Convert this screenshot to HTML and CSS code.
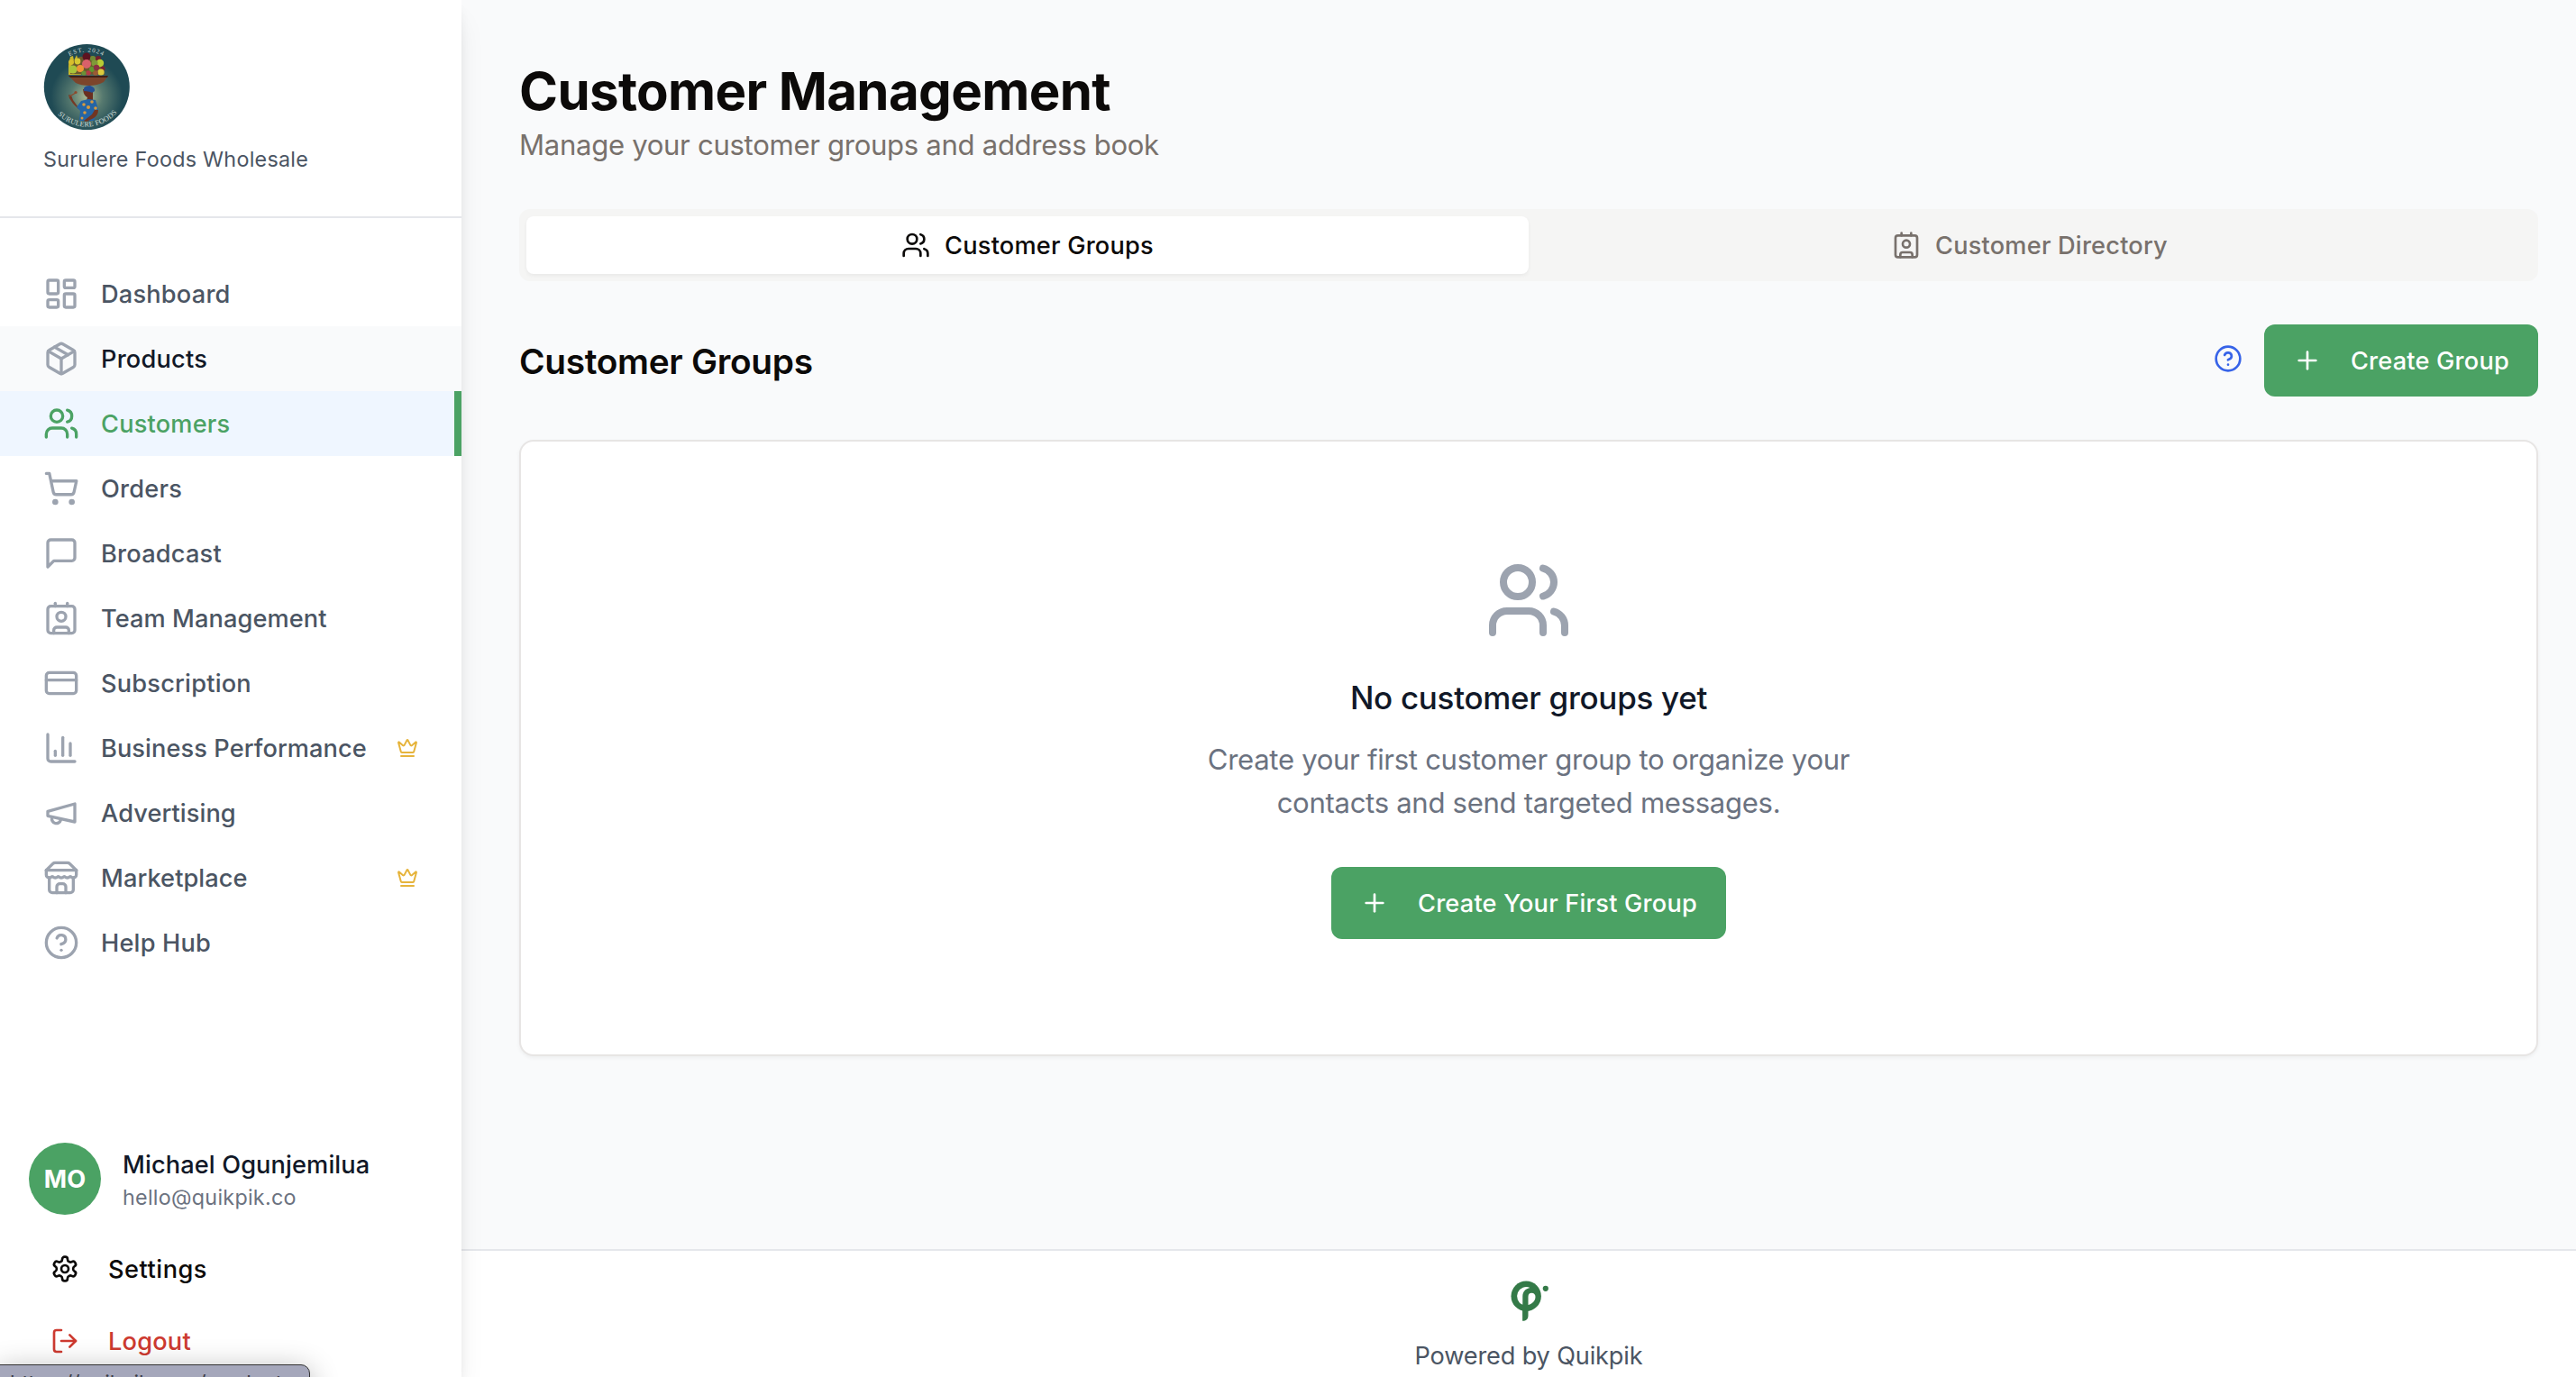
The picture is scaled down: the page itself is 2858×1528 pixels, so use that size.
FILE: index.html
```html
<!DOCTYPE html>
<html lang="en">
<head>
<meta charset="utf-8">
<title>Customer Management</title>
<link rel="stylesheet" href="styles.css">
</head>
<body>
<svg class="defs" width="0" height="0" aria-hidden="true">
  <symbol id="users" viewBox="0 0 24 24"><path d="M16 21v-2a4 4 0 0 0-4-4H6a4 4 0 0 0-4 4v2"/><circle cx="9" cy="7" r="4"/><path d="M22 21v-2a4 4 0 0 0-3-3.87"/><path d="M16 3.13a4 4 0 0 1 0 7.75"/></symbol>
  <symbol id="contact" viewBox="0 0 24 24"><path d="M16 2v2"/><path d="M7 22v-2a2 2 0 0 1 2-2h6a2 2 0 0 1 2 2v2"/><path d="M8 2v2"/><circle cx="12" cy="11" r="3"/><rect x="3" y="4" width="18" height="18" rx="2"/></symbol>
  <symbol id="help" viewBox="0 0 24 24"><circle cx="12" cy="12" r="10"/><path d="M9.09 9a3 3 0 0 1 5.83 1c0 2-3 3-3 3"/><path d="M12 17h.01"/></symbol>
  <symbol id="plus" viewBox="0 0 24 24"><path d="M5 12h14"/><path d="M12 5v14"/></symbol>
  <symbol id="crown" viewBox="0 0 24 24"><path d="M11.562 3.266a.5.5 0 0 1 .876 0L15.39 8.87a1 1 0 0 0 1.516.294L21.183 5.5a.5.5 0 0 1 .798.519l-2.834 10.246a1 1 0 0 1-.956.734H5.81a1 1 0 0 1-.957-.734L2.02 6.02a.5.5 0 0 1 .798-.519l4.276 3.664a1 1 0 0 0 1.516-.294z"/><path d="M5 21h14"/></symbol>
</svg>
<div class="app">
  <aside class="sidebar">
    <div class="brand">
      <svg class="brand-logo" viewBox="0 0 96 96">
        <defs>
          <radialGradient id="glow" cx="50%" cy="61%" r="42%"><stop offset="0" stop-color="#a9b893"/><stop offset=".45" stop-color="#56796f"/><stop offset="1" stop-color="#1f4a54"/></radialGradient>
          <path id="arc-top" d="M9.500 48a38.500 38.500 0 0 1 77 0"/>
          <path id="arc-bottom" d="M3.500 48a44.500 44.500 0 0 0 89 0"/>
        </defs>
        <circle cx="48.300" cy="48.500" r="47.500" fill="url(#glow)"/>
        <text class="logo-text logo-top"><textPath href="#arc-top" startOffset="50%">EST. 2024</textPath></text>
        <path d="M28 35V24l2-9 3-1 1 5 3-6 2 6 3-4v20z" fill="#c9b52b"/>
        <path d="M30 34l2-14 8-5 16-1 10 6 2 15z" fill="#6b5a2c"/>
        <g>
          <circle cx="48" cy="15" r="4.5" fill="#5c1420"/><circle cx="55" cy="17" r="3" fill="#6f8a35"/><circle cx="61" cy="17" r="3" fill="#741f2c"/>
          <circle cx="63" cy="22" r="4.2" fill="#b7cb35"/><circle cx="57" cy="22" r="3.6" fill="#7f9a38"/><circle cx="38" cy="20" r="3.4" fill="#d6c832"/>
          <circle cx="48" cy="23" r="5" fill="#d9616a"/><circle cx="33" cy="29" r="4.6" fill="#a8c43a"/><circle cx="41" cy="28" r="4" fill="#ee9535"/>
          <circle cx="54" cy="29" r="3" fill="#5f9630"/><circle cx="59" cy="27" r="3.2" fill="#8a3041"/><circle cx="66" cy="28" r="2.6" fill="#7a2430"/>
          <circle cx="64" cy="32" r="3.6" fill="#dccb3d"/><circle cx="50" cy="33" r="2.8" fill="#b43a45"/><circle cx="45" cy="33" r="2.6" fill="#6a9236"/><circle cx="58" cy="33" r="2.8" fill="#9a5b34"/><circle cx="31" cy="21" r="3" fill="#d8be2c"/>
        </g>
        <path d="M28 36h44l-5 7q-7 4-16 4t-15-3z" fill="#7c452b"/>
        <path d="M28 36h44l-1 2H30z" fill="#3f2018"/>
        <path d="M28 57l3 1 2 5 5 7 5 1 1 3-5-1-6-6-4-6z" fill="#753824"/>
        <path d="M29 59l7-4" stroke="#8d4a2c" stroke-width="1.200"/><circle cx="36" cy="54.500" r="1.600" fill="#8d4a2c"/>
        <path d="M44 51q1 8 5 9l-1 4h7V51z" fill="#6a2f20"/>
        <path d="M45 50q1-3 7-3 6 2 5 6-3 3-5 1-4-1-7-1z" fill="#244f93"/>
        <path d="M42 64l8-2 8 1 3 10-2 6-3 7H40l1-11-4-4z" fill="#2465a6"/>
        <g fill="#d69a3e"><circle cx="45" cy="68" r="1.8"/><circle cx="54" cy="65" r="1.8"/><circle cx="50" cy="71" r="2"/><circle cx="58" cy="72" r="1.8"/><circle cx="46" cy="77" r="1.8"/><circle cx="43" cy="83" r="1.5"/></g>
        <path d="M57 74l4 0q0 6-5 9l-8 4-3-1 9-7z" fill="#713522"/>
        <text class="logo-text logo-bottom"><textPath href="#arc-bottom" startOffset="51%">SURULERE FOODS</textPath></text>
      </svg>
      <div class="brand-name">Surulere Foods Wholesale</div>
    </div>
    <nav class="nav">
      <a class="nav-item"><svg class="icon" viewBox="0 0 24 24"><rect x="3" y="3" width="7" height="9" rx="1"/><rect x="14" y="3" width="7" height="5" rx="1"/><rect x="14" y="12" width="7" height="9" rx="1"/><rect x="3" y="16" width="7" height="5" rx="1"/></svg><span>Dashboard</span></a>
      <a class="nav-item hover"><svg class="icon" viewBox="0 0 24 24"><path d="m7.5 4.27 9 5.15"/><path d="M21 8a2 2 0 0 0-1-1.73l-7-4a2 2 0 0 0-2 0l-7 4A2 2 0 0 0 3 8v8a2 2 0 0 0 1 1.73l7 4a2 2 0 0 0 2 0l7-4A2 2 0 0 0 21 16Z"/><path d="m3.3 7 8.7 5 8.7-5"/><path d="M12 22V12"/></svg><span>Products</span></a>
      <a class="nav-item active"><svg class="icon"><use href="#users"/></svg><span>Customers</span></a>
      <a class="nav-item"><svg class="icon" viewBox="0 0 24 24"><circle cx="8" cy="21" r="1"/><circle cx="19" cy="21" r="1"/><path d="M2.05 2.05h2l2.66 12.42a2 2 0 0 0 2 1.58h9.78a2 2 0 0 0 1.95-1.57l1.65-7.43H5.12"/></svg><span>Orders</span></a>
      <a class="nav-item"><svg class="icon" viewBox="0 0 24 24"><path d="M21 15a2 2 0 0 1-2 2H7l-4 4V5a2 2 0 0 1 2-2h14a2 2 0 0 1 2 2z"/></svg><span>Broadcast</span></a>
      <a class="nav-item tight"><svg class="icon"><use href="#contact"/></svg><span>Team Management</span></a>
      <a class="nav-item"><svg class="icon" viewBox="0 0 24 24"><rect x="2" y="5" width="20" height="14" rx="2"/><path d="M2 10h20"/></svg><span>Subscription</span></a>
      <a class="nav-item tight"><svg class="icon" viewBox="0 0 24 24"><path d="M3 3v16a2 2 0 0 0 2 2h16"/><path d="M18 17V9"/><path d="M13 17V5"/><path d="M8 17v-3"/></svg><span>Business Performance</span><svg class="crown"><use href="#crown"/></svg></a>
      <a class="nav-item tight"><svg class="icon" viewBox="0 0 24 24"><path d="m3 11 18-5v12L3 14v-3z"/><path d="M11.6 16.8a3 3 0 1 1-5.8-1.6"/></svg><span>Advertising</span></a>
      <a class="nav-item tight"><svg class="icon" viewBox="0 0 24 24"><path d="m2 7 4.41-4.41A2 2 0 0 1 7.83 2h8.34a2 2 0 0 1 1.42.59L22 7"/><path d="M4 12v8a2 2 0 0 0 2 2h12a2 2 0 0 0 2-2v-8"/><path d="M15 22v-4a2 2 0 0 0-2-2h-2a2 2 0 0 0-2 2v4"/><path d="M2 7h20"/><path d="M22 7v3a2 2 0 0 1-2 2a2.7 2.7 0 0 1-1.59-.63.7.7 0 0 0-.82 0A2.7 2.7 0 0 1 16 12a2.7 2.7 0 0 1-1.59-.63.7.7 0 0 0-.82 0A2.7 2.7 0 0 1 12 12a2.7 2.7 0 0 1-1.59-.63.7.7 0 0 0-.82 0A2.7 2.7 0 0 1 8 12a2.7 2.7 0 0 1-1.59-.63.7.7 0 0 0-.82 0A2.7 2.7 0 0 1 4 12a2 2 0 0 1-2-2V7"/></svg><span>Marketplace</span><svg class="crown"><use href="#crown"/></svg></a>
      <a class="nav-item"><svg class="icon"><use href="#help"/></svg><span>Help Hub</span></a>
    </nav>
    <div class="account">
      <div class="profile">
        <div class="avatar">MO</div>
        <div class="profile-text">
          <div class="profile-name">Michael Ogunjemilua</div>
          <div class="profile-mail">hello@quikpik.co</div>
        </div>
      </div>
      <a class="account-link settings"><svg class="icon icon-sm" viewBox="0 0 24 24"><path d="M12.22 2h-.44a2 2 0 0 0-2 2v.18a2 2 0 0 1-1 1.73l-.43.25a2 2 0 0 1-2 0l-.15-.08a2 2 0 0 0-2.73.73l-.22.38a2 2 0 0 0 .73 2.73l.15.1a2 2 0 0 1 1 1.72v.51a2 2 0 0 1-1 1.74l-.15.09a2 2 0 0 0-.73 2.73l.22.38a2 2 0 0 0 2.73.73l.15-.08a2 2 0 0 1 2 0l.43.25a2 2 0 0 1 1 1.73V20a2 2 0 0 0 2 2h.44a2 2 0 0 0 2-2v-.18a2 2 0 0 1 1-1.73l.43-.25a2 2 0 0 1 2 0l.15.08a2 2 0 0 0 2.73-.73l.22-.39a2 2 0 0 0-.73-2.73l-.15-.08a2 2 0 0 1-1-1.74v-.5a2 2 0 0 1 1-1.74l.15-.09a2 2 0 0 0 .73-2.73l-.22-.38a2 2 0 0 0-2.73-.73l-.15.08a2 2 0 0 1-2 0l-.43-.25a2 2 0 0 1-1-1.73V4a2 2 0 0 0-2-2z"/><circle cx="12" cy="12" r="3"/></svg><span>Settings</span></a>
      <a class="account-link logout"><svg class="icon icon-sm" viewBox="0 0 24 24"><path d="M9 21H5a2 2 0 0 1-2-2V5a2 2 0 0 1 2-2h4"/><path d="m16 17 5-5-5-5"/><path d="M21 12H9"/></svg><span>Logout</span></a>
    </div>
  </aside>
  <div class="content">
    <main class="main">
      <h1 class="title">Customer Management</h1>
      <p class="subtitle">Manage your customer groups and address book</p>
      <div class="tabs">
        <div class="tab selected"><svg class="icon icon-sm"><use href="#users"/></svg><span>Customer Groups</span></div>
        <div class="tab"><svg class="icon icon-sm"><use href="#contact"/></svg><span>Customer Directory</span></div>
      </div>
      <div class="section-head">
        <h2 class="section-title">Customer Groups</h2>
        <div class="actions">
          <svg class="icon icon-sm help-link"><use href="#help"/></svg>
          <button class="button"><svg class="icon icon-sm"><use href="#plus"/></svg><span>Create Group</span></button>
        </div>
      </div>
      <section class="card">
        <svg class="icon icon-xl"><use href="#users"/></svg>
        <h3 class="empty-title">No customer groups yet</h3>
        <p class="empty-text">Create your first customer group to organize your<br>contacts and send targeted messages.</p>
        <button class="button"><svg class="icon icon-sm"><use href="#plus"/></svg><span>Create Your First Group</span></button>
      </section>
    </main>
    <footer class="footer">
      <svg class="footer-logo" viewBox="0 0 48 48">
        <circle cx="21.200" cy="22.300" r="16.700" fill="#347a48"/>
        <path d="M17.100 36v13.700c4 0 6.400-2 6.400-6V36z" fill="#347a48"/>
        <path d="M17.300 31.800A10.300 10.300 0 0 1 25.500 12.900C20.500 13.800 17.300 17.500 17.300 22.500z" fill="#fff"/>
        <path d="M23.500 31.900V23c0-2.800 1.500-4.200 3.700-4.200 2.800 0 4.300 2 4.300 4.200 0 4.500-3.500 8-8 8.900z" fill="#fff"/>
        <circle cx="42.800" cy="13.800" r="3.100" fill="#347a48"/>
      </svg>
      <div class="footer-text">Powered by Quikpik</div>
    </footer>
  </div>
</div>
<div class="status">https://quikpik.com/products</div>
</body>
</html>
```
FILE: styles.css
```css
* { box-sizing: border-box; margin: 0; padding: 0; }
html, body { height: 100%; overflow: hidden; }
body {
  font-family: Inter, "Liberation Sans", sans-serif;
  font-size: 27.2px;
  line-height: 40px;
  letter-spacing: .2px;
  color: #0c0a09;
  background: #f9fafb;
}
.defs { position: absolute; }
.app { display: flex; height: 1528px; }
.icon {
  flex: none;
  width: 40px;
  height: 40px;
  fill: none;
  stroke: currentColor;
  stroke-width: 2;
  stroke-linecap: round;
  stroke-linejoin: round;
}
.icon-sm { width: 32px; height: 32px; }
.icon-xl { width: 96px; height: 96px; color: #9ca3af; }
.nav-item span, .account-link span, .tab span, .button span { padding-top: 2px; }

.sidebar {
  display: flex;
  flex-direction: column;
  flex: none;
  position: relative;
  z-index: 1;
  width: 512px;
  background: #fff;
  box-shadow: 0 20px 30px -6px rgba(0, 0, 0, .1), 0 8px 12px -4px rgba(0, 0, 0, .1);
}
.brand { height: 242px; padding: 48px 48px 0; border-bottom: 2px solid #e5e7eb; }
.brand-logo { display: block; width: 96px; height: 96px; }
.logo-text { fill: #cfdcd8; font-family: "Liberation Serif", serif; text-anchor: middle; }
.logo-top { font-size: 7px; letter-spacing: 1.1px; }
.logo-bottom { font-size: 8.2px; letter-spacing: .2px; }
.brand-name { margin-top: 17px; font-size: 23.3px; line-height: 32px; letter-spacing: .28px; color: #4b5563; }
.nav { padding-top: 48px; }
.nav-item {
  display: flex;
  align-items: center;
  gap: 24px;
  height: 72px;
  padding: 0 48px;
  font-weight: 500;
  color: #4b5563;
}
.nav-item.tight { letter-spacing: .08px; }
.nav-item .icon { color: #9ca3af; }
.nav-item.hover { background: #f9fafb; color: #111827; }
.nav-item.active { background: #eff6ff; color: #4ba264; border-right: 8px solid #4ba264; }
.nav-item.active .icon { color: #4ba264; }
.crown { width: 24px; height: 24px; margin-left: auto; fill: none; stroke: #e6b43c; stroke-width: 2; stroke-linecap: round; stroke-linejoin: round; }
.account { margin-top: auto; padding: 0 32px; }
.profile { display: flex; gap: 24px; height: 80px; margin-bottom: 20px; }
.avatar {
  width: 80px;
  padding-top: 1px;
  border-radius: 50%;
  background: #4ba264;
  color: #fff;
  font-weight: 700;
  line-height: 80px;
  text-align: center;
}
.profile-text { padding-top: 5px; }
.profile-name { font-weight: 500; color: #111827; letter-spacing: .12px; }
.profile-mail { font-size: 23.3px; line-height: 32px; letter-spacing: .28px; color: #6b7280; }
.account-link { display: flex; align-items: center; gap: 32px; height: 80px; padding-left: 24px; font-weight: 500; }
.settings { letter-spacing: .5px; }
.logout { color: #cd3a30; }

.content { display: flex; flex-direction: column; flex: 1; }
.main { flex: 1; padding: 65px 42px 0 64px; }
.title { font-size: 58.2px; line-height: 72px; font-weight: 700; letter-spacing: -.65px; }
.subtitle { font-size: 31.1px; line-height: 48px; letter-spacing: -.31px; color: #78716c; }
.tabs {
  display: grid;
  grid-template-columns: 1fr 1fr;
  height: 80px;
  margin-top: 47px;
  padding: 8px;
  border-radius: 12px;
  background: #f5f5f4;
}
.tab { display: flex; align-items: center; justify-content: center; gap: 16px; border-radius: 8px; font-weight: 500; color: #78716c; }
.tab.selected { background: #fff; color: #0c0a09; box-shadow: 0 2px 4px rgba(0, 0, 0, .05); }
.section-head { display: flex; align-items: center; justify-content: space-between; height: 80px; margin-top: 48px; }
.section-title { padding-top: 2px; font-size: 38.8px; line-height: 56px; font-weight: 600; letter-spacing: -.3px; }
.actions { display: flex; align-items: center; gap: 24px; }
.help-link { margin-bottom: 4px; color: #3763e8; }
.button {
  display: flex;
  align-items: center;
  gap: 32px;
  height: 80px;
  padding: 0 32px;
  border: 0;
  border-radius: 12px;
  background: #4ba264;
  color: #fff;
  font: inherit;
  font-weight: 500;
  letter-spacing: inherit;
}
.card {
  display: flex;
  flex-direction: column;
  align-items: center;
  height: 684px;
  margin-top: 48px;
  padding-top: 128px;
  border: 2px solid #e7e5e4;
  border-radius: 16px;
  background: #fff;
  box-shadow: 0 2px 4px rgba(0, 0, 0, .05);
}
.empty-title { margin-top: 32px; font-size: 35px; line-height: 56px; font-weight: 500; letter-spacing: -.3px; color: #111827; }
.empty-text { margin: 17px 0 47px; font-size: 31.1px; line-height: 48px; letter-spacing: -.31px; color: #6b7280; text-align: center; }
.footer {
  display: flex;
  flex-direction: column;
  align-items: center;
  height: 142px;
  padding: 28px 0 0 22px;
  border-top: 2px solid #e5e7eb;
  background: #fff;
}
.footer-logo { flex: none; width: 48px; height: 48px; overflow: visible; }
.footer-text { margin-top: 21px; line-height: 40px; letter-spacing: -.18px; color: #4b5563; }
.status {
  position: absolute;
  z-index: 2;
  left: -2px;
  top: 1514px;
  width: 346px;
  height: 50px;
  padding: 0 0 0 12px;
  border: 1px solid #333;
  border-radius: 0 10px 0 0;
  background: #a5a7bb;
  box-shadow: 0 6px 32px rgba(0, 0, 0, .3);
  color: #3c3d47;
  font-size: 23px;
  letter-spacing: 0;
  white-space: nowrap;
}
```
